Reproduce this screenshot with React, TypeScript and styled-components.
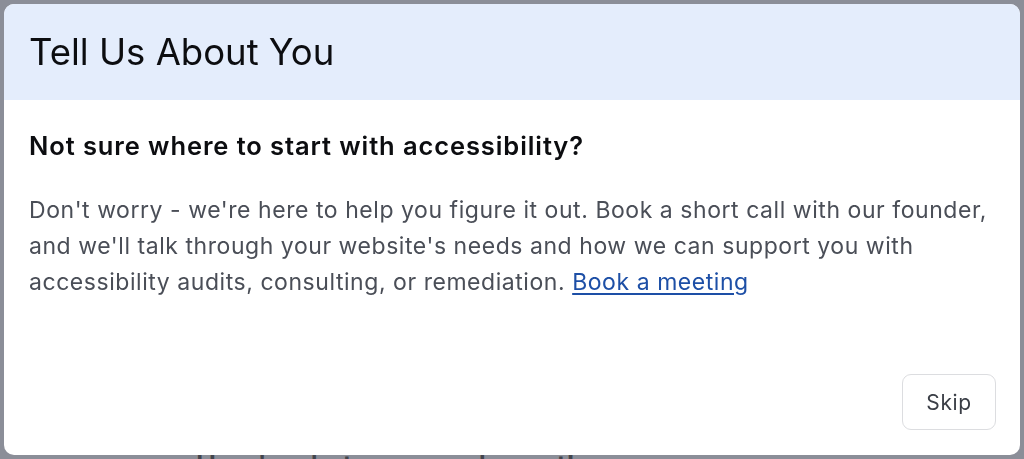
import { createGlobalStyle, styled } from "styled-components";

const GlobalStyle = createGlobalStyle`
  html, body {
    margin: 0;
    padding: 0;
    width: 1024px;
    height: 459px;
    overflow: hidden;
    background: #8b8e98;
    font-family: "Inter", "Noto Sans", sans-serif;
  }
`;

// page behind the overlay
const Page = styled.div`
  height: 459px;
  box-sizing: border-box;
  overflow: hidden;
  padding: 450px 0 0 196px;
`;

const PageHeading = styled.h2`
  margin: 0;
  font-size: 27px;
  line-height: 32px;
  font-weight: 600;
  color: #43454c;
`;

const Overlay = styled.div`
  position: fixed;
  inset: 0;
  padding: 4px;
  box-sizing: border-box;
  display: flex;
`;

const Modal = styled.div`
  flex: 1;
  display: flex;
  flex-direction: column;
  background: #ffffff;
  border-radius: 10px;
  overflow: hidden;
`;

const Header = styled.div`
  height: 96px;
  display: flex;
  align-items: center;
  padding: 0 25px;
  background: #e4edfc;
`;

const Title = styled.h1`
  margin: 0;
  font-size: 36.5px;
  font-weight: 400;
  color: #0c0d10;
`;

const Body = styled.div`
  flex: 1;
  padding: 30px 25px 0;
`;

const SubTitle = styled.h3`
  margin: 0 0 31px;
  font-size: 25.5px;
  line-height: 31px;
  font-weight: 600;
  letter-spacing: 0.9px;
  color: #0c0d10;
`;

const Text = styled.p`
  margin: 0;
  font-size: 23px;
  line-height: 36px;
  letter-spacing: 0.55px;
  color: #4a4e57;
`;

const Link = styled.a`
  color: #1d4fa6;
  text-decoration: underline;
  text-underline-offset: 3px;
`;

const Footer = styled.div`
  display: flex;
  justify-content: flex-end;
  padding: 0 24px 25px;
`;

const SkipButton = styled.button`
  width: 94px;
  height: 56px;
  border: 1px solid #dcdde0;
  border-radius: 9px;
  background: #ffffff;
  font-family: "Inter", sans-serif;
  font-size: 21px;
  letter-spacing: 0.6px;
  color: #3a3e46;
  cursor: pointer;
`;

export default function App() {
  return (
    <>
      <GlobalStyle />
      <Page>
        <PageHeading>Here's what you can do next!</PageHeading>
      </Page>
      <Overlay>
        <Modal>
          <Header>
            <Title>Tell Us About You</Title>
          </Header>
          <Body>
            <SubTitle>Not sure where to start with accessibility?</SubTitle>
            <Text>
              Don't worry - we're here to help you figure it out. Book a short call with our founder,
              and we'll talk through your website's needs and how we can support you with
              accessibility audits, consulting, or remediation. <Link href="#">Book a meeting</Link>
            </Text>
          </Body>
          <Footer>
            <SkipButton>Skip</SkipButton>
          </Footer>
        </Modal>
      </Overlay>
    </>
  );
}
